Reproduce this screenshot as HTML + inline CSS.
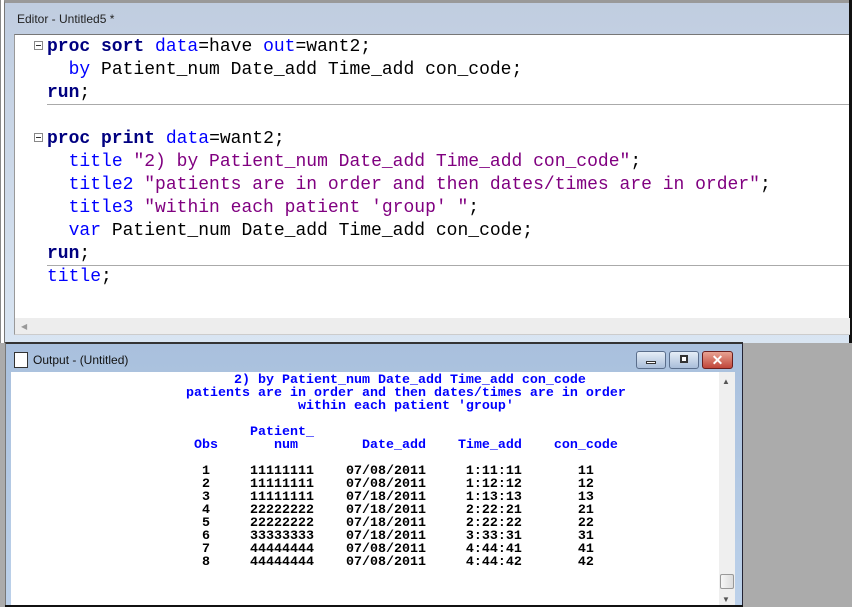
<!DOCTYPE html>
<html><head><style>
*{margin:0;padding:0;box-sizing:border-box}
body{width:852px;height:607px;overflow:hidden;background:#ababab;position:relative;font-family:"Liberation Sans",sans-serif}
.abs{position:absolute}
pre{position:absolute;white-space:pre}
.code{font-family:"Liberation Mono",monospace;font-size:18px;line-height:23px;color:#000}
.k{color:#000080;font-weight:bold}
.b{color:#0000ff}
.p{color:#800080}
.out{font-family:"Liberation Mono",monospace;font-size:13.33px;line-height:13px;font-weight:bold;color:#000}
.ob{color:#0000ff}
</style></head><body>
<div class="abs" style="left:0;top:0;width:852px;height:343px;background:#fff;border-left:1px solid #888"></div>
<div class="abs" style="top:0;left:4px;width:848px;height:343px;background:linear-gradient(#c0cde0,#d9e5f2);border-top:3px solid #999;border-left:1px solid #777"></div>
<div class="abs" style="left:17px;top:12px;font-size:12px;color:#222">Editor - Untitled5 *</div>
<div class="abs" style="left:14px;top:34px;width:836px;height:284px;background:#fff;border-top:1px solid #777;border-left:1px solid #999"></div>
<div class="abs" style="left:849px;top:0;width:3px;height:343px;background:#111"></div>
<div class="abs" style="left:47px;top:104px;width:802px;height:1px;background:#aaa"></div>
<div class="abs" style="left:47px;top:265px;width:802px;height:1px;background:#aaa"></div>
<div class="abs" style="left:14px;top:318px;width:836px;height:17px;background:#ededed;border-left:1px solid #999;border-bottom:1px solid #ccc"></div>
<div class="abs" style="left:21px;top:322px;font-size:8px;color:#999">◀</div>
<div class="abs" style="left:34px;top:41px;width:9px;height:9px;border:1px solid #888;background:#fff"><div style="margin:3px 1px 0;height:1px;background:#333"></div></div>
<div class="abs" style="left:34px;top:133px;width:9px;height:9px;border:1px solid #888;background:#fff"><div style="margin:3px 1px 0;height:1px;background:#333"></div></div>
<pre class="code" style="left:47px;top:36px"><span class="k">proc sort</span> <span class="b">data</span>=have <span class="b">out</span>=want2;
  <span class="b">by</span> Patient_num Date_add Time_add con_code;
<span class="k">run</span>;

<span class="k">proc print</span> <span class="b">data</span>=want2;
  <span class="b">title</span> <span class="p">"2) by Patient_num Date_add Time_add con_code"</span>;
  <span class="b">title2</span> <span class="p">"patients are in order and then dates/times are in order"</span>;
  <span class="b">title3</span> <span class="p">"within each patient 'group' "</span>;
  <span class="b">var</span> Patient_num Date_add Time_add con_code;
<span class="k">run</span>;
<span class="b">title</span>;</pre>
<div class="abs" style="left:5px;top:342px;width:738px;height:265px;background:linear-gradient(#a9c0dd,#bcd1ea);border-top:2px solid #333;border-left:1px solid #777;border-right:1px solid #223"></div>
<div class="abs" style="left:14px;top:352px;width:14px;height:16px;border:1px solid #333;background:#fff"></div>
<div class="abs" style="left:33px;top:353px;font-size:12px;color:#111">Output - (Untitled)</div>
<div class="abs" style="left:636px;top:351px;width:30px;height:18px;border:1px solid #5a6e8c;border-radius:3px;background:linear-gradient(#e5edf7,#a9bdd9)"><div style="margin:9px 9px 0;height:3px;border:1px solid #333;background:#fff"></div></div>
<div class="abs" style="left:669px;top:351px;width:30px;height:18px;border:1px solid #5a6e8c;border-radius:3px;background:linear-gradient(#e5edf7,#a9bdd9)"><div style="margin:3px 10px 0;height:8px;border:2px solid #333;background:#fff"></div></div>
<div class="abs" style="left:702px;top:351px;width:31px;height:18px;border:1px solid #6a1e1e;border-radius:3px;background:linear-gradient(#e8a393,#c0463a);color:#fff;font-weight:bold;font-size:14px;text-align:center;line-height:16px">✕</div>
<div class="abs" style="left:11px;top:372px;width:708px;height:235px;background:#fff"></div>
<div class="abs" style="left:719px;top:372px;width:16px;height:235px;background:#efefef"></div>
<div class="abs" style="left:722px;top:377px;font-size:8px;color:#555">▲</div>
<div class="abs" style="left:720px;top:574px;width:14px;height:15px;border:1px solid #999;border-radius:2px;background:linear-gradient(90deg,#f6f6f6,#ddd)"></div>
<div class="abs" style="left:722px;top:595px;font-size:8px;color:#555">▼</div>
<div class="abs" style="left:5px;top:605px;width:738px;height:2px;background:#111"></div>
<pre class="out" style="left:186px;top:374px"><span class="ob">      2) by Patient_num Date_add Time_add con_code
patients are in order and then dates/times are in order
              within each patient 'group'

        Patient_
 Obs       num        Date_add    Time_add    con_code</span>

  1     11111111    07/08/2011     1:11:11       11
  2     11111111    07/08/2011     1:12:12       12
  3     11111111    07/18/2011     1:13:13       13
  4     22222222    07/18/2011     2:22:21       21
  5     22222222    07/18/2011     2:22:22       22
  6     33333333    07/18/2011     3:33:31       31
  7     44444444    07/08/2011     4:44:41       41
  8     44444444    07/08/2011     4:44:42       42</pre>
</body></html>
